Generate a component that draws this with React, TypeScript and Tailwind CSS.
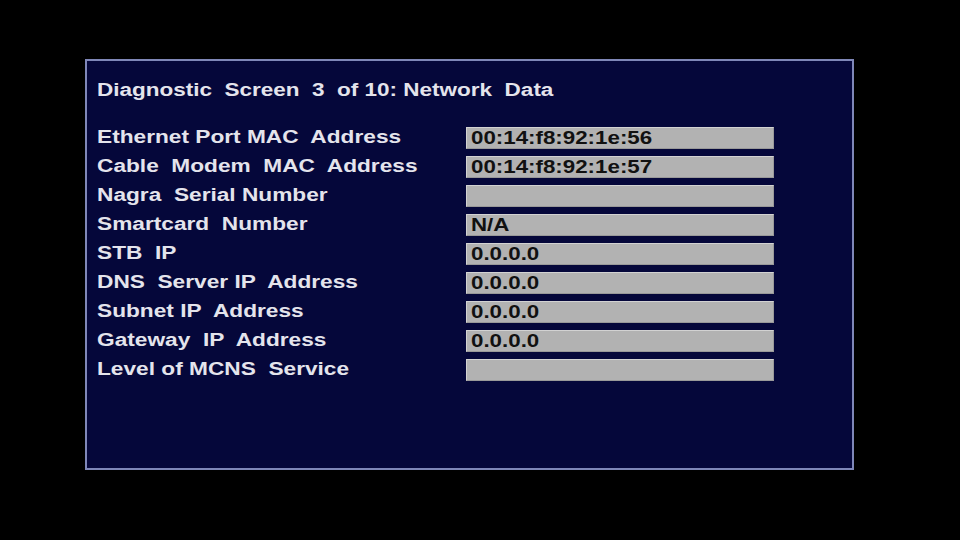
import React from "react";

const rows: { label: string; value: string }[] = [
  { label: "Ethernet Port MAC  Address", value: "00:14:f8:92:1e:56" },
  { label: "Cable  Modem  MAC  Address", value: "00:14:f8:92:1e:57" },
  { label: "Nagra  Serial Number", value: "" },
  { label: "Smartcard  Number", value: "N/A" },
  { label: "STB  IP", value: "0.0.0.0" },
  { label: "DNS  Server IP  Address", value: "0.0.0.0" },
  { label: "Subnet IP  Address", value: "0.0.0.0" },
  { label: "Gateway  IP  Address", value: "0.0.0.0" },
  { label: "Level of MCNS  Service", value: "" },
];

export default function App() {
  return (
    <div
      className="w-[960px] h-[540px] bg-black pl-[85px] pt-[59px]"
      style={{ fontFamily: '"Liberation Sans", Arial, sans-serif' }}
    >
      <div className="w-[769px] h-[411px] border-2 border-[#7f87b8] bg-[#05073a] pl-[10px] pt-[15px]">
        <div className="h-[29px] leading-[29px] text-[18px] font-bold text-[#e4e4ec] whitespace-pre">
          <span className="inline-block origin-left scale-x-[1.25]">
            Diagnostic  Screen  3  of 10: Network  Data
          </span>
        </div>
        <div className="mt-[18px] flex flex-col">
          {rows.map((r) => (
            <div key={r.label} className="flex items-center h-[29px]">
              <div className="w-[369px] text-[18px] font-bold text-[#e4e4ec] whitespace-pre leading-[29px]">
                <span className="inline-block origin-left scale-x-[1.26]">{r.label}</span>
              </div>
              <div className="w-[308px] h-[22px] bg-[#b2b2b2] border border-[#d2d2d2] border-b-[#999] border-r-[#999] pl-[4px] text-[18px] font-bold text-[#111] leading-[20px] whitespace-pre">
                <span className="inline-block origin-left scale-x-[1.24]">{r.value}</span>
              </div>
            </div>
          ))}
        </div>
      </div>
    </div>
  );
}
